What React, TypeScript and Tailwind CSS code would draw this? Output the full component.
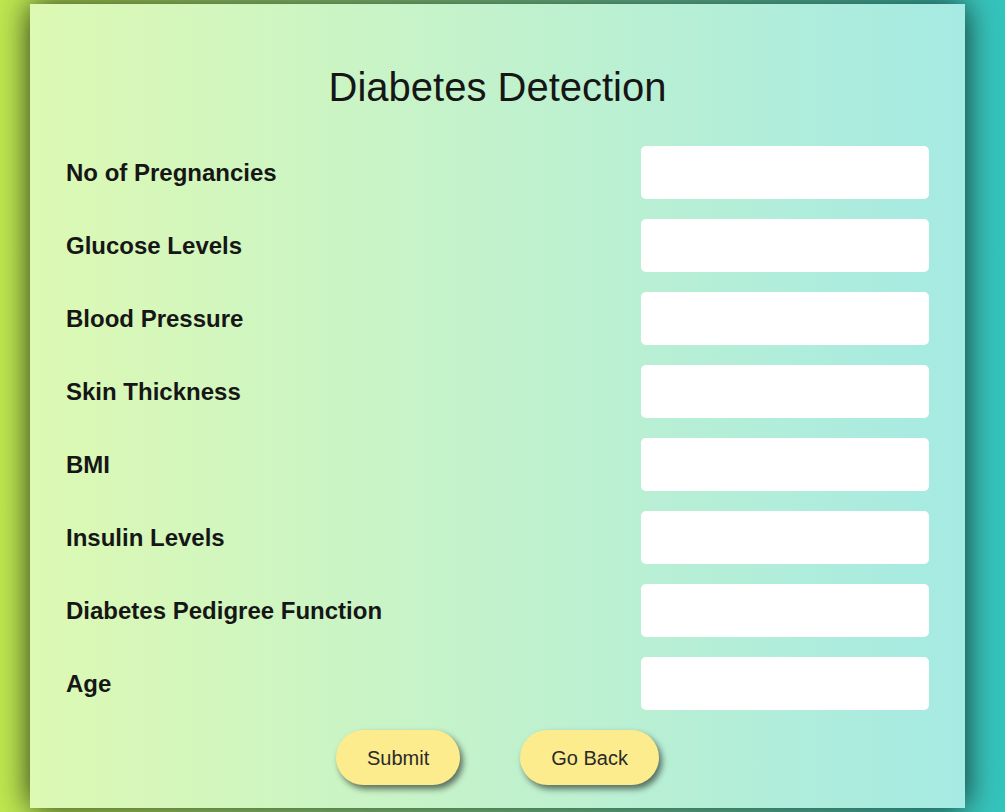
const fields = [
  "No of Pregnancies",
  "Glucose Levels",
  "Blood Pressure",
  "Skin Thickness",
  "BMI",
  "Insulin Levels",
  "Diabetes Pedigree Function",
  "Age",
];

export default function App() {
  return (
    <div
      className="min-h-screen w-full pt-[4px] bg-gradient-to-r from-[#bfe84f] to-[#32c4bd] overflow-hidden"
      style={{ fontFamily: '"Liberation Sans", Arial, sans-serif' }}
    >
      <div className="ml-[30px] w-[935px] h-[804px] bg-gradient-to-r from-[#ddf9b3] to-[#a5eae3] shadow-[0_0_30px_rgba(0,0,0,0.8)] pt-[60px] px-[36px]">
        <h1 className="text-center text-[40px] leading-[46px] text-[#161616] font-normal">Diabetes Detection</h1>

        <form className="mt-[36px] flex flex-col gap-[20px]" onSubmit={(e) => e.preventDefault()}>
          {fields.map((f) => (
            <div key={f} className="flex items-center justify-between">
              <label className="text-[24px] font-bold text-[#161616]">{f}</label>
              <input className="w-[288px] h-[53px] rounded-[5px] bg-white border-0 outline-none px-3 text-[18px]" />
            </div>
          ))}

          <div className="flex justify-center gap-[60px]">
            <button
              type="submit"
              className="h-[55px] px-[31px] rounded-full bg-[#fcec8e] text-[20px] text-[#2a2a2a] shadow-[3px_4px_6px_rgba(0,0,0,0.55)]"
            >
              Submit
            </button>
            <button
              type="button"
              className="h-[55px] px-[31px] rounded-full bg-[#fcec8e] text-[20px] text-[#2a2a2a] shadow-[3px_4px_6px_rgba(0,0,0,0.55)]"
            >
              Go Back
            </button>
          </div>
        </form>
      </div>
    </div>
  );
}
